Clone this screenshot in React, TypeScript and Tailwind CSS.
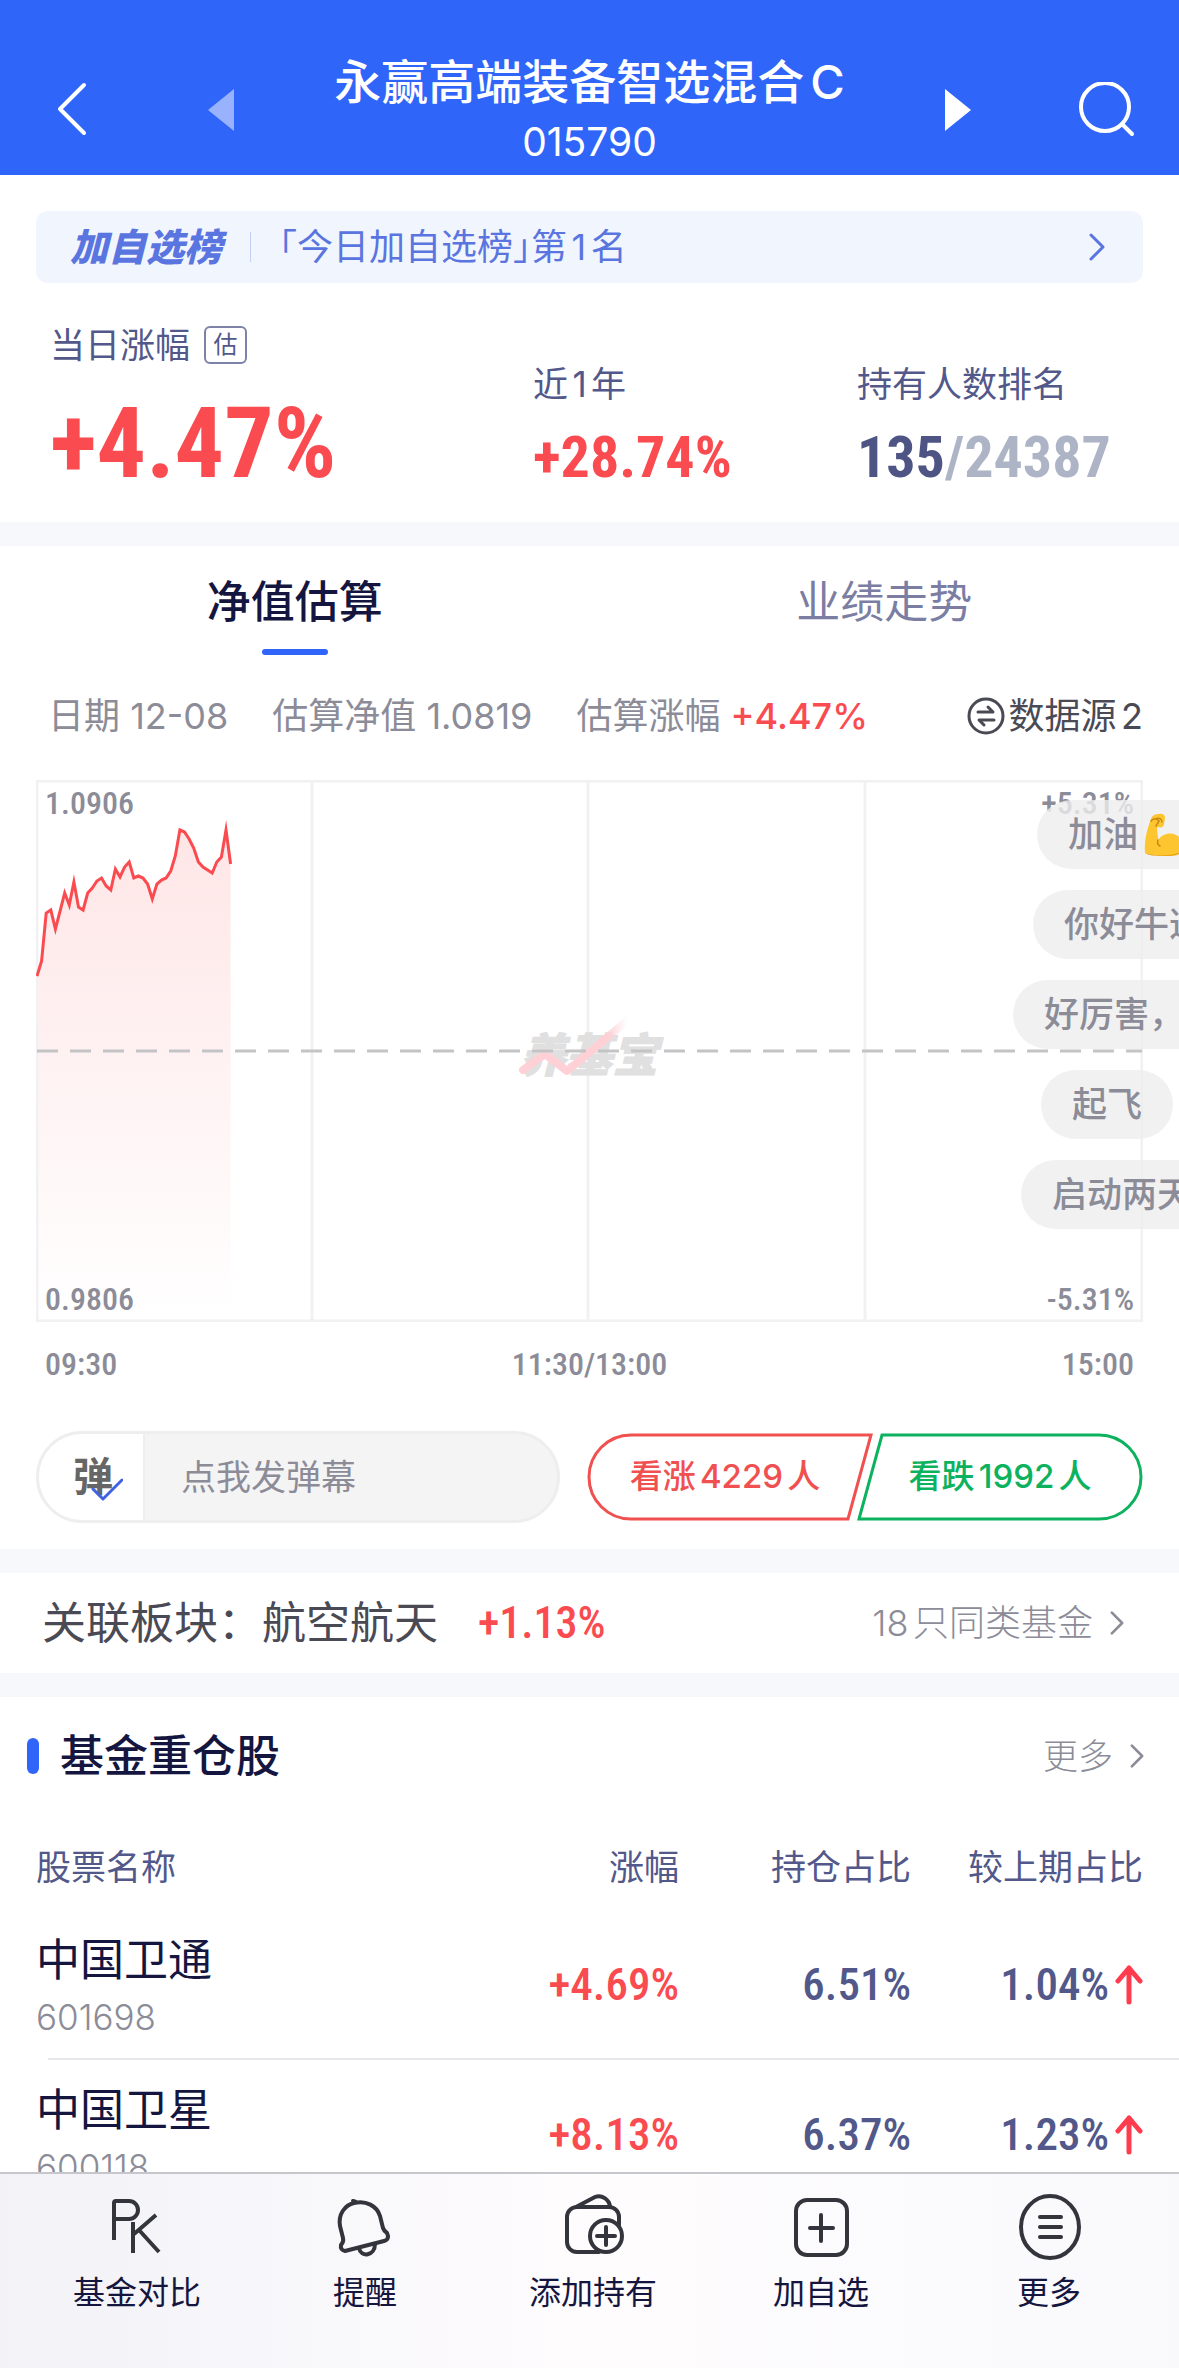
import type { ReactNode } from "react"

const numFont = "font-['Roboto_Condensed','Roboto',sans-serif]"

const trend = [
  196, 181, 133, 130, 149, 131, 113, 125, 102, 127, 130, 113, 108, 101, 98, 106, 110, 89, 97, 87, 82, 98,
  96, 98, 104, 119, 104, 100, 98, 91, 76, 50, 52, 59, 68, 82, 87, 90, 93, 82, 77, 50, 84,
]
const points = trend.map((y, i) => `${(i * 4.61 + 1).toFixed(1)},${y}`).join(" ")

const stocks = [
  { name: "中国卫通", code: "601698", change: "+4.69%", ratio: "6.51%", diff: "1.04%" },
  { name: "中国卫星", code: "600118", change: "+8.13%", ratio: "6.37%", diff: "1.23%" },
]

function Chevron({ className }: { className: string }) {
  return (
    <svg viewBox="0 0 16 28" className={className} fill="none" stroke="currentColor" strokeWidth="3" strokeLinecap="round" strokeLinejoin="round">
      <path d="M2 2l12 12L2 26" />
    </svg>
  )
}

function Divider() {
  return <div className="h-6 bg-[#f7f8fc]" />
}

function Header() {
  return (
    <header className="bg-[#3065fa] text-white pt-[50px] pb-[5px] px-11 flex items-center justify-between">
      <div className="flex items-center gap-[108px]">
        <button aria-label="返回" className="w-14 h-14">
          <svg viewBox="0 0 56 56" className="w-14 h-14" fill="none" stroke="currentColor" strokeWidth="4" strokeLinecap="round" strokeLinejoin="round">
            <path d="M40 3L16 27l24 24" />
          </svg>
        </button>
        <button aria-label="上一只" className="w-[26px] h-11 text-white/50">
          <svg viewBox="0 0 26 42" className="w-[26px] h-[42px]" fill="currentColor">
            <path d="M26 0v42L0 21z" />
          </svg>
        </button>
      </div>
      <div className="text-center">
        <h1 className="text-[47px] leading-[64px] font-medium">永赢高端装备智选混合C</h1>
        <p className="text-[39px] leading-[56px]">015790</p>
      </div>
      <div className="flex items-center gap-[108px]">
        <button aria-label="下一只" className="w-[26px] h-11">
          <svg viewBox="0 0 26 42" className="w-[26px] h-[42px]" fill="currentColor">
            <path d="M0 0v42l26-21z" />
          </svg>
        </button>
        <button aria-label="搜索" className="w-14 h-14">
          <svg viewBox="0 0 56 56" className="w-14 h-14" fill="none" stroke="currentColor" strokeWidth="4" strokeLinecap="round">
            <circle cx="26" cy="25" r="24" />
            <path d="M43 42l10 10" />
          </svg>
        </button>
      </div>
    </header>
  )
}

function Biceps() {
  return (
    <svg viewBox="0 0 44 44" className="w-11 h-11 shrink-0">
      <path
        d="M2 40C1 28 4 16 8 6c1-4 5-5 8-5 4-1 6 1 6 4l-1 6c0 3-3 4-6 3l-1 1c0 4 1 8 1 12 4-6 12-8 18-5 8 4 11 10 9 15-2 4-9 6-17 6C14 43 7 43 2 40z"
        fill="#fdc52f"
      />
      <path d="M15 27c-1 3 0 5 2 6M8 8c2-3 6-3 8 0l-3 5M13 6c3-2 6 0 6 3" fill="none" stroke="#c98812" strokeWidth="1.5" strokeLinecap="round" />
      <path d="M2 40c8 3 24 4 36-1-4 4-11 4-16 4C14 43 7 43 2 40z" fill="#e8a019" />
    </svg>
  )
}

function Danmu({ className, children }: { className: string; children: ReactNode }) {
  return (
    <div className={`h-[69px] px-[31px] rounded-full bg-[#ededed]/80 flex items-center gap-[5px] whitespace-nowrap text-[35px] font-medium text-[#8c8c98] ${className}`}>
      {children}
    </div>
  )
}

function Chart() {
  return (
    <div className={`mt-[39px] px-9 relative font-medium text-[#8c8c98] ${numFont}`}>
      <div className="relative">
        <svg viewBox="0 0 1107 542" className="block w-full" fill="none">
          <defs>
            <linearGradient id="area" x1="0" y1="0" x2="0" y2="1">
              <stop offset="0" stopColor="#fa4b50" stopOpacity="0.14" />
              <stop offset="1" stopColor="#fa4b50" stopOpacity="0" />
            </linearGradient>
            <linearGradient id="mark" x1="0" y1="0" x2="1" y2="0">
              <stop offset="0.8" stopColor="#ffd0d6" />
              <stop offset="1" stopColor="#ffd0d6" stopOpacity="0" />
            </linearGradient>
          </defs>
          <polygon points={`1,540 ${points} 194.6,540`} fill="url(#area)" />
          <path d="M1 1h1105v540H1zM276 1v540M552 1v540M829 1v540" stroke="#f1f1f3" strokeWidth="3" />
          <text x="484" y="292" fontSize="46" fontWeight="900" fontStyle="italic" fill="#e0e0e0" stroke="#e0e0e0" strokeWidth="1" strokeLinejoin="round" fontFamily="Noto Sans CJK SC, sans-serif">
            养基宝
          </text>
          <path d="M487 290L509 274L531 291L591 241" stroke="url(#mark)" strokeWidth="8" strokeLinecap="round" strokeLinejoin="round" />
          <path d="M1 271h1105" stroke="#c4c4c6" strokeWidth="3" strokeDasharray="21 12" />
          <polyline points={points} stroke="#fa4b50" strokeWidth="3" strokeMiterlimit="10" />
        </svg>
        <div className="absolute inset-0 px-[9px] py-1 flex flex-col justify-between text-[32px] leading-[38px]">
          <div className="flex justify-between">
            <span>1.0906</span>
            <span>+5.31%</span>
          </div>
          <div className="flex justify-between">
            <span>0.9806</span>
            <span>-5.31%</span>
          </div>
        </div>
      </div>
      <div className="mt-[22px] px-[9px] flex justify-between text-[32px] leading-[40px]">
        <span>09:30</span>
        <span>11:30/13:00</span>
        <span>15:00</span>
      </div>
      <div className="absolute top-5 right-0 w-[166px] h-[460px] overflow-hidden flex flex-col items-start gap-[21px] font-['Inter','Noto_Sans_CJK_SC',sans-serif]">
        <Danmu className="ml-6">
          加油
          <Biceps />
        </Danmu>
        <Danmu className="ml-5">你好牛逼</Danmu>
        <Danmu className="ml-0">好厉害，</Danmu>
        <Danmu className="ml-7">起飞</Danmu>
        <Danmu className="ml-2">启动两天</Danmu>
      </div>
    </div>
  )
}

function VoteRow() {
  return (
    <div className="mt-[47px] mx-9 flex items-center">
      <div className="flex-1 h-[92px] rounded-full border-3 border-[#eeeeee] bg-[#f4f4f4] flex overflow-hidden">
        <button aria-label="弹幕开关" className="w-[106px] shrink-0 bg-white border-r-2 border-[#eeeeee] pl-[34px] relative text-left text-[40px] font-bold text-[#666666]">
          弹
          <svg viewBox="0 0 32 24" className="absolute left-[52px] top-[44px] w-8 h-6" fill="none" stroke="#3f62e0" strokeWidth="3" strokeLinecap="round" strokeLinejoin="round">
            <path d="M2 11l10 10L31 2" />
          </svg>
        </button>
        <input aria-label="点我发弹幕" placeholder="点我发弹幕" className="min-w-0 flex-1 px-9 text-[35px] bg-transparent outline-none placeholder:text-[#8c8c98]" />
      </div>
      <div className="ml-[27px] flex w-[556px] text-[33px] font-medium">
        <button className="relative w-[286px] h-[88px] -mr-[16px] pr-[10px] text-[#f0504f]">
          <svg viewBox="0 0 286 88" className="absolute inset-0" fill="none" stroke="currentColor" strokeWidth="3">
            <path d="M44 2H284L261 86H44A42 42 0 0 1 44 2z" />
          </svg>
          看涨4229人
        </button>
        <button className="relative w-[286px] h-[88px] text-[#0db25f]">
          <svg viewBox="0 0 286 88" className="absolute inset-0" fill="none" stroke="currentColor" strokeWidth="3">
            <path d="M25 2H242A42 42 0 0 1 242 86H2z" />
          </svg>
          看跌1992人
        </button>
      </div>
    </div>
  )
}

function UpArrow() {
  return (
    <svg viewBox="0 0 28 40" className="w-7 h-10" fill="none" stroke="#ff3b4e" strokeWidth="5" strokeLinecap="round" strokeLinejoin="round">
      <path d="M14 37V3M3 16L14 3l11 13" />
    </svg>
  )
}

function Holdings() {
  return (
    <section>
      <div className="mt-[29px] pl-[27px] pr-[34px] flex items-center leading-[60px]">
        <span className="w-3 h-9 rounded-full bg-[#3065fa]" />
        <h2 className="ml-[21px] text-[44px] font-medium text-[#15163f]">基金重仓股</h2>
        <a href="#more" className="ml-auto flex items-center gap-4 text-[35px] font-light text-[#8c8c98]">
          更多
          <Chevron className="w-4 h-6" />
        </a>
      </div>
      <table className="mt-14 w-full table-fixed text-right">
        <thead className="text-[35px] leading-[50px] text-[#52588a]">
          <tr>
            <th className="pl-9 pb-[18px] font-normal text-left">股票名称</th>
            <th className="w-[300px] pb-[18px] font-normal">涨幅</th>
            <th className="w-[232px] pb-[18px] font-normal">持仓占比</th>
            <th className="w-[268px] pb-[18px] pr-9 font-normal">较上期占比</th>
          </tr>
        </thead>
        <tbody className="text-[45px] text-[#52588a]">
          {stocks.map((s) => (
            <tr key={s.code} className="relative h-[150px]">
              <td className="pl-9 pt-1 text-left after:absolute after:left-12 after:right-0 after:bottom-0 after:h-[2px] after:bg-[#e8e8ec]">
                <div className="text-[44px] leading-[56px] text-[#15163f]">{s.name}</div>
                <div className="mt-1 text-[35px] leading-[50px] font-light text-[#8c8c98]">{s.code}</div>
              </td>
              <td className={`font-medium text-[#fa4b50] ${numFont}`}>{s.change}</td>
              <td className={`font-medium ${numFont}`}>{s.ratio}</td>
              <td className={`pr-9 font-medium ${numFont}`}>
                <div className="flex items-center justify-end gap-[6px]">
                  {s.diff}
                  <UpArrow />
                </div>
              </td>
            </tr>
          ))}
        </tbody>
      </table>
    </section>
  )
}

function NavItem({ label, children }: { label: string; children: ReactNode }) {
  return (
    <button className="flex-1 flex flex-col items-center text-[32px] leading-[44px] text-[#15163f]">
      <svg viewBox="0 0 68 68" className="w-[68px] h-[68px] mb-[9px]" fill="none" stroke="#33343c" strokeWidth="4" strokeLinecap="round" strokeLinejoin="round">
        {children}
      </svg>
      {label}
    </button>
  )
}

function BottomBar() {
  return (
    <nav className="fixed inset-x-0 bottom-0 h-[196px] border-t-2 border-[#c6c6cc] bg-linear-to-r from-[#f2f2f7] via-[#fefcfd] to-[#f9f9fc] pt-5 pl-[23px] pr-4 flex items-start">
      <NavItem label="基金对比">
        <path d="M11 46V9q0-2 2-2h13a9 9 0 0 1 0 18H13M30 28v31M53 21L31 40M36 36l20 22" strokeLinecap="butt" />
      </NavItem>
      <NavItem label="提醒">
        <path d="M14 57q-5-1-4-6 3-3 2-7L9 32C7 20 14 11 23 9c12-3 23 3 26 13l3 12q1 3 4 5c2 4 1 7-3 8zM22 7l3 1" />
        <path d="M28 54c2 10 16 8 16-4" />
      </NavItem>
      <NavItem label="添加持有">
        <path d="M40 58H18a10 10 0 0 1-10-10V23a10 10 0 0 1 10-10H50a10 10 0 0 1 10 10V31M17 13L36 3C43 0 50 6 51 12" />
        <circle cx="47" cy="42" r="16" />
        <path d="M47 33v18M38 42h18" />
      </NavItem>
      <NavItem label="加自选">
        <rect x="9" y="6" width="51" height="55" rx="11" />
        <path d="M34 21v26M23 34h23" />
      </NavItem>
      <NavItem label="更多">
        <ellipse cx="35" cy="33" rx="29" ry="31" />
        <path d="M25 23h21M25 33h21M25 43h21" />
      </NavItem>
    </nav>
  )
}

export default function App() {
  return (
    <div className="min-h-screen overflow-x-hidden bg-white pb-36 font-['Inter','Noto_Sans_CJK_SC',sans-serif] [text-autospace:normal]" lang="zh-CN">
      <Header />

      <section>
        <a href="#rank" className="mt-9 mx-9 h-[72px] pl-[34px] pr-[38px] rounded-xl bg-[#f1f6fe] flex items-center text-[#5b75e0]">
          <span className="text-[38px] font-black italic">加自选榜</span>
          <span className="ml-7 w-px h-[30px] bg-[#c5cff5]" />
          <span className="ml-7 text-[36px] [font-feature-settings:'halt']">「今日加自选榜」第1名</span>
          <Chevron className="w-4 h-7 ml-auto" />
        </a>
        <div className="mt-[37px] pl-[50px] pr-9 pb-7 grid grid-cols-[483fr_324fr_286fr] items-end text-[35px] leading-[50px] text-[#52588a]">
          <div>
            <div className="flex items-center gap-[14px]">
              当日涨幅
              <span className="w-[43px] h-[38px] rounded-md border-2 border-[#7d82a8] text-[24px] leading-[34px] text-center">估</span>
            </div>
            <div className={`mt-6 text-[98px] leading-[100px] font-bold text-[#fa4b50] ${numFont}`}>+4.47%</div>
          </div>
          <div>
            近1年
            <div className={`mt-[11px] text-[58px] leading-[74px] font-bold text-[#fa4b50] ${numFont}`}>+28.74%</div>
          </div>
          <div>
            持有人数排名
            <div className={`mt-[11px] text-[58px] leading-[74px] font-bold text-[#adb4c6] ${numFont}`}>
              <span className="text-[#4e5585]">135</span>/24387
            </div>
          </div>
        </div>
      </section>

      <Divider />

      <section className="pb-[26px]">
        <div className="pt-[26px] grid grid-cols-2 text-[44px] leading-[60px]">
          <button className="flex flex-col items-center font-medium text-[#15163f]">
            净值估算
            <span className="mt-[17px] w-[66px] h-[6px] rounded-sm bg-[#3065fa]" />
          </button>
          <button className="flex flex-col items-center text-[#7b7da3]">业绩走势</button>
        </div>
        <div className="mt-9 pl-12 pr-9 flex items-center gap-11 text-[36px] leading-[50px] text-[#8c8c98]">
          <span>日期 12-08</span>
          <span>估算净值 1.0819</span>
          <span>
            估算涨幅 <span className="font-medium text-[#fa4b50]">+4.47%</span>
          </span>
          <button className="ml-auto flex items-center gap-1 text-[36px] text-[#4a4a55]">
            <svg viewBox="0 0 38 38" className="w-[38px] h-[38px]" fill="none" stroke="currentColor" strokeWidth="3" strokeLinecap="round" strokeLinejoin="round">
              <circle cx="19" cy="19" r="17" />
              <path d="M11 15h15l-5-5M27 23H12l5 5" />
            </svg>
            数据源2
          </button>
        </div>
        <Chart />
        <VoteRow />
      </section>

      <Divider />
      <a href="#sector" className="h-[100px] pl-[42px] pr-[54px] flex items-center text-[44px] text-[#4a4a55]">
        关联板块：航空航天
        <span className={`ml-10 font-medium text-[#fa4b50] ${numFont}`}>+1.13%</span>
        <span className="ml-auto flex items-center gap-4 text-[36px] font-light text-[#8c8c98]">
          18只同类基金
          <Chevron className="w-4 h-6" />
        </span>
      </a>
      <Divider />

      <Holdings />
      <BottomBar />
    </div>
  )
}
